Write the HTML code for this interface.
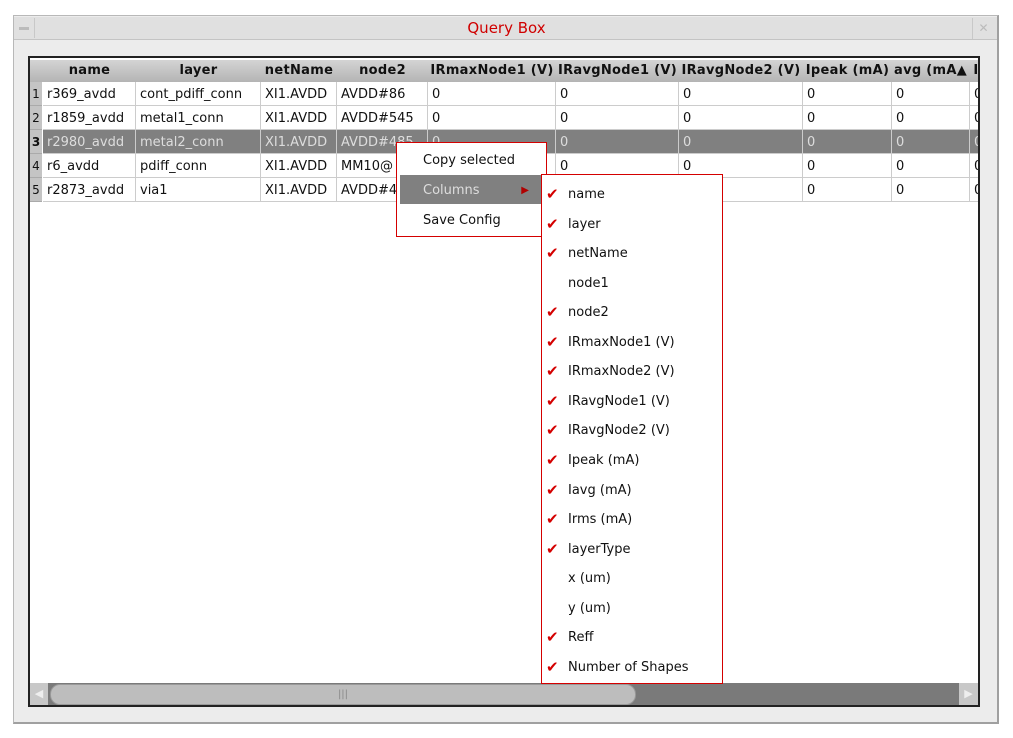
<!DOCTYPE html>
<html><head><style>
body{margin:0;width:1013px;height:738px;background:#fff;position:relative;overflow:hidden;font-family:"DejaVu Sans","Liberation Sans",sans-serif;font-size:13px;color:#111}
.a{position:absolute;box-sizing:border-box}
.win{left:13px;top:15px;width:986px;height:709px;background:#ececec;border:1px solid #b8b8b8;border-right:2px solid #a0a0a0;border-bottom:2px solid #a0a0a0}
.title{left:14px;top:17px;width:983px;height:23px;background:#e0e0e0;border-bottom:1px solid #c4c4c4}
.frame{left:28px;top:56px;width:952px;height:651px;border:2px solid #222;background:#fff;overflow:hidden}
.hd{position:absolute;top:2px;height:22px;background:linear-gradient(#d4d4d4,#b4b4b4);border-right:1px solid #999;font-weight:bold;text-align:center;line-height:22px;white-space:nowrap;overflow:hidden;letter-spacing:0.3px}
.c{position:absolute;height:24px;line-height:25px;border-right:1px solid #ccc;border-bottom:1px solid #ccc;padding-left:4px;white-space:nowrap;overflow:hidden;box-sizing:border-box}
.rn{position:absolute;width:12px;height:24px;line-height:25px;background:#c4c4c4;text-align:center;font-size:12px;border-bottom:1px solid #aaa;box-sizing:border-box}
.sel{background:#808080;color:#ddd}
.menu{border:1px solid #d40000;background:#fff}
.mi{position:absolute;left:0;height:29px;line-height:31px;width:100%;padding-left:26px;box-sizing:border-box}
.ck{position:absolute;left:4px;color:#d40000;font-weight:bold;font-size:15px}
</style></head><body>
<div class="a win"></div>
<div class="a title"></div>
<div class="a" style="left:15px;top:18px;width:20px;height:20px;border-right:1px solid #c8c8c8"><div style="position:absolute;left:4px;top:9px;width:10px;height:3px;background:#bbb"></div></div>
<div class="a" style="left:972px;top:18px;width:22px;height:21px;border-left:1px solid #c8c8c8;color:#bbb;font-size:12px;text-align:center;line-height:21px">✕</div>
<div class="a" style="left:0;top:18px;width:1013px;text-align:center;color:#d00000;font-size:15px;line-height:21px">Query Box</div>
<div class="a frame">
<div class="hd" style="left:0;width:13px"></div>
<div class="hd" style="left:13px;width:93px">name</div>
<div class="hd" style="left:106px;width:125px">layer</div>
<div class="hd" style="left:231px;width:76px">netName</div>
<div class="hd" style="left:307px;width:91px">node2</div>
<div class="hd" style="left:398px;width:128px">IRmaxNode1 (V)</div>
<div class="hd" style="left:526px;width:123px">IRavgNode1 (V)</div>
<div class="hd" style="left:649px;width:124px">IRavgNode2 (V)</div>
<div class="hd" style="left:773px;width:89px">Ipeak (mA)</div>
<div class="hd" style="left:862px;width:78px;text-align:left;padding-left:2px">avg (mA▲</div>
<div class="hd" style="left:940px;width:12px">I</div>
<div id="rows"></div>
<div style="position:absolute;left:0;top:625px;width:948px;height:22px;background:#7a7a7a"></div>
<div style="position:absolute;left:0;top:625px;width:18px;height:22px;background:#c8c8c8;color:#eee;text-align:center;line-height:22px;font-size:11px">◀</div>
<div style="position:absolute;left:20px;top:626px;width:584px;height:19px;background:#bdbdbd;border-radius:10px;border:1px solid #999;text-align:center;line-height:19px;color:#888;font-size:10px">|||</div>
<div style="position:absolute;left:929px;top:625px;width:19px;height:22px;background:#c8c8c8;color:#eee;text-align:center;line-height:22px;font-size:11px">▶</div>
</div>
<div class="a menu" style="left:396px;top:142px;width:151px;height:95px">
<div class="mi" style="top:2px">Copy selected</div>
<div class="mi" style="top:32px;left:3px;width:141px;background:#808080;color:#ddd;padding-left:23px">Columns<span style="position:absolute;right:12px;color:#b00000;font-size:10px">▶</span></div>
<div class="mi" style="top:62px">Save Config</div>
</div>
<div class="a menu" style="left:541px;top:174px;width:182px;height:510px" id="sub"></div>
<script>
var d=[["r369_avdd","cont_pdiff_conn","XI1.AVDD","AVDD#86"],["r1859_avdd","metal1_conn","XI1.AVDD","AVDD#545"],["r2980_avdd","metal2_conn","XI1.AVDD","AVDD#485"],["r6_avdd","pdiff_conn","XI1.AVDD","MM10@"],["r2873_avdd","via1","XI1.AVDD","AVDD#4"]];
var L=[13,106,231,307,398,526,649,773,862,940,960],h="";
d.forEach(function(r,i){var t=24+i*24,s=i==2?" sel":"";
h+='<div class="rn" style="left:0;top:'+t+'px;'+(i==2?'font-weight:bold':'')+'">'+(i+1)+'</div>';
var v=r.concat(["0","0","0","0","0","0"]);
for(var j=0;j<10;j++)h+='<div class="c'+s+'" style="left:'+L[j]+'px;top:'+t+'px;width:'+(L[j+1]-L[j])+'px">'+v[j]+'</div>';});
document.getElementById("rows").innerHTML=h;
var it=[["name",1],["layer",1],["netName",1],["node1",0],["node2",1],["IRmaxNode1 (V)",1],["IRmaxNode2 (V)",1],["IRavgNode1 (V)",1],["IRavgNode2 (V)",1],["Ipeak (mA)",1],["Iavg (mA)",1],["Irms (mA)",1],["layerType",1],["x (um)",0],["y (um)",0],["Reff",1],["Number of Shapes",1]],g="";
it.forEach(function(x,i){g+='<div class="mi" style="top:'+(4+i*29.55)+'px">'+(x[1]?'<span class="ck">✔</span>':'')+x[0]+'</div>';});
document.getElementById("sub").innerHTML=g;
</script>
</body></html>
